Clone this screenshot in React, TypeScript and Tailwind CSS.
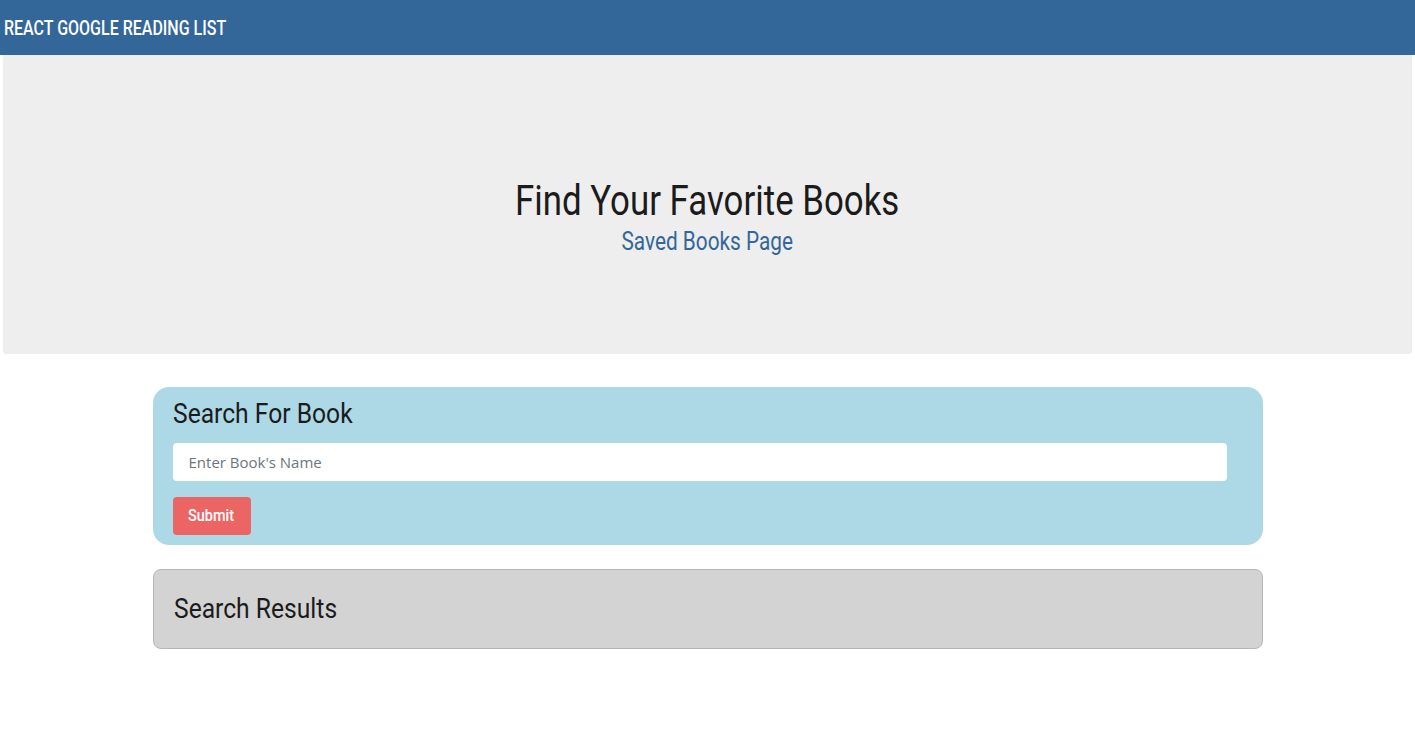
const font = { fontFamily: 'Roboto, "Liberation Sans", sans-serif' };

const App = (): JSX.Element => {
  return (
    <div className="min-h-screen bg-white text-[#212529]" style={font}>
      <nav className="h-[55px] bg-[#336699] flex items-center px-1">
        <span className="inline-block origin-left scale-x-[0.8] text-white text-[20px] font-medium">
          REACT GOOGLE READING LIST
        </span>
      </nav>

      <div className="mx-[3px] h-[299px] bg-[#eeeeee] rounded-b-[3px] flex flex-col items-center justify-center pt-[24px]">
        <h1 className="scale-x-[0.81] text-[43px] leading-[1.15] text-[#1b1b1b]">Find Your Favorite Books</h1>
        <a className="inline-block scale-x-[0.8] text-[26px] leading-[1.2] text-[#336699]" href="#">
          Saved Books Page
        </a>
      </div>

      <div className="w-[1110px] mx-auto mt-[33px] flex flex-col gap-[24px]">
        <div className="bg-[#add8e6] rounded-[16px] pl-[20px] pr-[36px] pt-[10px] pb-[10px]">
          <h3 className="origin-left scale-x-[0.88] text-[28px] leading-[1.2] text-[#1b1b1b]">Search For Book</h3>
          <input
            className="mt-[12px] w-full h-[38px] bg-white rounded-[4px] px-[16px] text-[15px] outline-none placeholder:text-[#6c757d]"
            style={{ fontFamily: '"Open Sans", sans-serif' }}
            placeholder="Enter Book's Name"
          />
          <button className="mt-[16px] h-[38px] w-[78px] flex items-center justify-center bg-[#ec6565] rounded-[4px] text-white text-[17px] font-medium">
            <span className="inline-block scale-x-[0.85]">Submit</span>
          </button>
        </div>

        <div className="bg-[#d3d3d3] border border-[#b5b5b5] rounded-[8px] h-[80px] flex items-center px-[20px]">
          <h3 className="origin-left scale-x-[0.88] text-[28px] leading-[1.2] text-[#1b1b1b]">Search Results</h3>
        </div>
      </div>
    </div>
  );
};

export default App;
